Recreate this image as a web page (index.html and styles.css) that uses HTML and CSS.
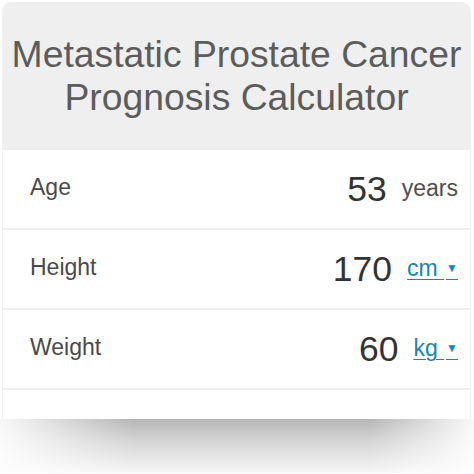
FILE: index.html
```html
<!DOCTYPE html>
<html lang="en">
<head>
  <meta charset="UTF-8" />
  <meta name="viewport" content="width=device-width, initial-scale=1.0"/>
  <title>Metastatic Prostate Cancer Prognosis Calculator</title>
  <link rel="stylesheet" href="styles.css">
</head>
<body>
  <div class="calc-card">
    <div class="calc-header">
      <h1 class="calc-title">Metastatic Prostate Cancer Prognosis Calculator</h1>
    </div>
    <div class="calc-row">
      <div class="calc-label">Age</div>
      <div class="calc-input">
        <span class="calc-value">53</span>
        <span class="calc-unit">years</span>
      </div>
    </div>
    <div class="calc-row">
      <div class="calc-label">Height</div>
      <div class="calc-input">
        <span class="calc-value">170</span>
        <a class="calc-unit unit-select" href="#">cm <span class="caret">▼</span></a>
      </div>
    </div>
    <div class="calc-row">
      <div class="calc-label">Weight</div>
      <div class="calc-input">
        <span class="calc-value">60</span>
        <a class="calc-unit unit-select" href="#">kg <span class="caret">▼</span></a>
      </div>
    </div>
    <div class="calc-row calc-row-cut"></div>
  </div>
  <div class="card-shadow"></div>
</body>
</html>
```

FILE: styles.css
```css
body {
  margin: 0;
  background: #fff;
  font-family: "Liberation Sans", Arial, sans-serif;
  width: 474px;
  height: 474px;
  overflow: hidden;
}

.calc-card {
  margin: 2px 3px 0 2px;
  border-left: 1px solid #f1f1f1;
  border-right: 1px solid #f1f1f1;
  border-radius: 9px 9px 0 0;
  overflow: hidden;
}

.calc-header {
  background: #efefef;
  height: 148px;
  padding-top: 31px;
  box-sizing: border-box;
}

.calc-title {
  margin: 0;
  font-size: 37.3px;
  font-weight: normal;
  line-height: 43px;
  text-align: center;
  color: #5c5c5c;
}

.calc-row {
  display: flex;
  align-items: center;
  justify-content: space-between;
  height: 78px;
  padding: 0 12px 0 27px;
  border-bottom: 2px solid #efefef;
  background: #fff;
}

.calc-label {
  font-size: 23px;
  color: #4a4a4a;
  margin-bottom: 4px;
}

.calc-input {
  display: flex;
  align-items: center;
}

.calc-value {
  font-size: 35.5px;
  color: #333;
  margin-right: 15px;
}

.calc-unit {
  font-size: 23px;
  color: #4f4f4f;
  margin-bottom: 2px;
}

.unit-select {
  color: #1b84b5;
  text-decoration: underline;
  text-underline-offset: 3px;
  text-decoration-thickness: 1px;
}

.caret {
  font-size: 12px;
  vertical-align: 4px;
  margin-left: 2px;
}

.calc-row-cut {
  height: 29px;
  border-bottom: none;
}

.card-shadow {
  height: 54px;
  background: linear-gradient(to bottom, #b6b6b6, #d4d4d4 40%, #f6f6f6);
  -webkit-mask-image: linear-gradient(to right, rgba(0,0,0,0.1), #000 28%, #000 78%, rgba(0,0,0,0.1));
  mask-image: linear-gradient(to right, rgba(0,0,0,0.1), #000 28%, #000 78%, rgba(0,0,0,0.1));
}
```
